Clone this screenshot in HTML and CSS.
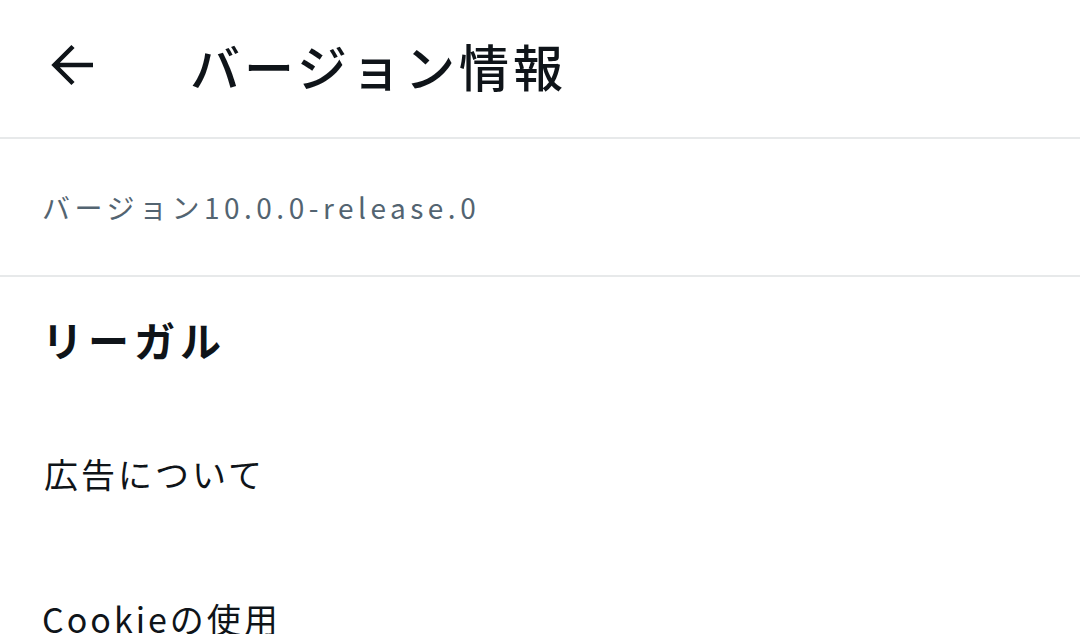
FILE: index.html
```html
<!DOCTYPE html>
<html lang="ja">
<head>
<meta charset="utf-8">
<title>バージョン情報</title>
<link rel="stylesheet" href="styles.css">
</head>
<body>
<div class="page">
  <header class="header">
    <svg class="back" width="44" height="42" viewBox="0 0 44 42" aria-hidden="true">
      <path d="M22 2.5 L3.5 21 L22 39.5 M3.5 21 H42" fill="none" stroke="#0f1419" stroke-width="4.5" stroke-linejoin="miter"/>
    </svg>
    <h1 class="title">バージョン情報</h1>
  </header>
  <section class="version-row">
    <span class="version">バージョン10.0.0-release.0</span>
  </section>
  <section class="legal">
    <h2 class="legal-heading">リーガル</h2>
    <div class="item">広告について</div>
    <div class="item">Cookieの使用</div>
  </section>
</div>
</body>
</html>
```
FILE: styles.css
```css
html, body {
  margin: 0;
  padding: 0;
  background: #ffffff;
}
body {
  font-family: "Noto Sans CJK JP", "Noto Sans", sans-serif;
  color: #0f1419;
  width: 1080px;
  height: 634px;
  overflow: hidden;
}
.page {
  display: flex;
  flex-direction: column;
}
.header {
  display: flex;
  align-items: center;
  padding-left: 51px;
  gap: 95px;
  border-bottom: 2px solid #e7e9ea;
  box-sizing: border-box;
  height: 139px;
}
.back {
  display: block;
  flex: none;
  margin-top: -8px;
}
.title {
  margin: 0;
  font-size: 50px;
  font-weight: 500;
  letter-spacing: 4px;
  line-height: 1;
  margin-top: -8px;
}
.version-row {
  height: 138px;
  box-sizing: border-box;
  border-bottom: 2px solid #e7e9ea;
  display: flex;
  align-items: center;
  padding-left: 42px;
}
.version {
  font-size: 28px;
  color: #536471;
  letter-spacing: 4.5px;
  line-height: 1;
}
.legal {
  display: flex;
  flex-direction: column;
  padding-left: 42px;
}
.legal-heading {
  margin: 0;
  height: 124px;
  display: flex;
  align-items: center;
  font-size: 41px;
  font-weight: 700;
  letter-spacing: 5px;
}
.item {
  height: 145px;
  display: flex;
  align-items: center;
  font-size: 34px;
  letter-spacing: 3px;
}
.item:first-of-type {
  padding-left: 2px;
}
```
